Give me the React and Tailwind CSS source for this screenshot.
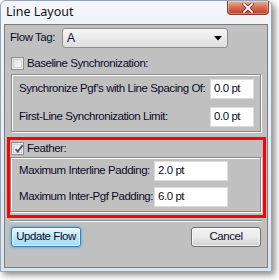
import React from "react";

const body = { fontFamily: '"Liberation Sans", Arial, sans-serif' };
const title = { fontFamily: '"Noto Sans", "Open Sans", sans-serif' };

function CheckBox({ checked }) {
  return (
    <div className="w-[13px] h-[13px] border border-[#8e8f8f] bg-gradient-to-br from-[#dcdcdc] to-[#fbfbfb] p-[1px] shrink-0">
      <div className="w-full h-full border border-[#d0d0d0] bg-gradient-to-br from-[#e3e3e3] to-[#fafafa] relative">
        {checked && (
          <svg className="absolute left-[0px] top-[-1px]" width="10" height="10" viewBox="0 0 10 10">
            <path d="M1.5 5.2 L3.8 7.6 L8.6 1.2" stroke="#3b4f8e" strokeWidth="1.8" fill="none" strokeLinejoin="miter" />
          </svg>
        )}
      </div>
    </div>
  );
}

function Field({ value, w }) {
  return (
    <div className={`${w} h-[20px] shrink-0 bg-white border border-[#dcdcdc] flex items-center pl-[3px] text-[#0c0c2a]`}>
      {value}
    </div>
  );
}

function Group({ children, cls }) {
  return (
    <div className={`${cls} border border-[#8a8a8a] shadow-[inset_1px_1px_0_#ffffff,1px_1px_0_#ffffff]`}>
      {children}
    </div>
  );
}

export default function App() {
  return (
    <div className="w-[279px] h-[280px] bg-white" style={body}>
      <div className="w-[272px] h-[272px] flex flex-col rounded-t-[6px] border border-[#95a5b8] bg-gradient-to-b from-[#f3f6fa] to-[#dbe5ef] shadow-[3px_3px_6px_rgba(0,0,0,0.45)]">
        <div className="h-[23px] flex items-start justify-between">
          <div className="pl-[5px] pt-[4px] text-[12.5px] leading-[14px] text-[#141414]" style={title}>
            Line Layout
          </div>
          <div className="mr-[2px] w-[42px] h-[14px] rounded-b-[4px] border border-t-0 border-[#8b3a2c] bg-gradient-to-b from-[#eab09e] via-[#d66a52] to-[#c23a22] flex items-center justify-center shadow-[inset_0_0_0_1px_rgba(255,255,255,0.35)]">
            <svg width="12" height="10" viewBox="0 0 12 10">
              <path d="M2 1 L10 9 M10 1 L2 9" stroke="#5a2a20" strokeWidth="3.2" strokeLinecap="square" />
              <path d="M2 1 L10 9 M10 1 L2 9" stroke="#ffffff" strokeWidth="1.8" strokeLinecap="square" />
            </svg>
          </div>
        </div>
        <div className="mx-[3px] mb-[3px] flex-1 border border-[#7d7d7d] bg-[#c0c0c0] flex flex-col text-[11.5px] tracking-[-0.45px] whitespace-nowrap text-[#0c0c2a]">
          <div className="mt-[3px] flex items-center h-[20px]">
            <div className="w-[57px] shrink-0 pl-[5px]">Flow Tag:</div>
            <div className="w-[166px] h-[20px] rounded-[3px] border border-[#8e8f8f] bg-gradient-to-b from-[#f6f6f6] to-[#dedede] flex items-center justify-between pl-[4px] pr-[5px] text-[12px]">
              <span>A</span>
              <svg width="8" height="5" viewBox="0 0 8 5">
                <path d="M0 0 L8 0 L4 4.5 Z" fill="#000" />
              </svg>
            </div>
          </div>

          <div className="mt-[9px] ml-[6px] flex items-center gap-[3px] h-[13px]">
            <CheckBox />
            <span>Baseline Synchronization:</span>
          </div>

          <Group cls="mt-[4px] ml-[6px] w-[250px] h-[58px] pt-[4px] flex flex-col gap-[8px]">
            <div className="flex items-center">
              <div className="w-[198px] shrink-0 pl-[7px]">Synchronize Pgf’s with Line Spacing Of:</div>
              <Field value="0.0 pt" w="w-[44px]" />
            </div>
            <div className="flex items-center">
              <div className="w-[198px] shrink-0 pl-[7px]">First-Line Synchronization Limit:</div>
              <Field value="0.0 pt" w="w-[44px]" />
            </div>
          </Group>

          <div className="mt-[5px] ml-[2px] w-[259px] h-[81px] border-[3px] border-[#ff0000] flex flex-col">
            <div className="mt-[2px] ml-[1px] flex items-center gap-[3px] h-[13px]">
              <CheckBox checked />
              <span>Feather:</span>
            </div>
            <Group cls="mt-[2px] w-[251px] h-[55px] pt-[3px] flex flex-col gap-[6px]">
              <div className="flex items-center">
                <div className="w-[143px] shrink-0 pl-[8px]">Maximum Interline Padding:</div>
                <Field value="2.0 pt" w="w-[74px]" />
              </div>
              <div className="flex items-center">
                <div className="w-[143px] shrink-0 pl-[8px]">Maximum Inter-Pgf Padding:</div>
                <Field value="6.0 pt" w="w-[74px]" />
              </div>
            </Group>
          </div>

          <div className="mt-[2px] ml-[5px] w-[252px] h-[2px] border-t border-[#8a8a8a] border-b border-b-white" />

          <div className="mt-[5px] ml-[6px] flex items-center">
            <div className="w-[70px] h-[20px] shrink-0 rounded-[3px] border border-[#3c7fb1] bg-gradient-to-b from-[#eaf6fd] via-[#bee6fd] to-[#a7d9f5] flex items-center justify-center shadow-[0_0_2px_1px_rgba(80,180,240,0.8),inset_0_0_0_1px_rgba(255,255,255,0.6)]">
              Update Flow
            </div>
            <div className="ml-[110px] w-[70px] h-[20px] shrink-0 rounded-[3px] border border-[#707070] bg-gradient-to-b from-[#f2f2f2] via-[#ebebeb] to-[#cfcfcf] flex items-center justify-center shadow-[inset_0_0_0_1px_rgba(255,255,255,0.7)]">
              Cancel
            </div>
          </div>
        </div>
      </div>
    </div>
  );
}
